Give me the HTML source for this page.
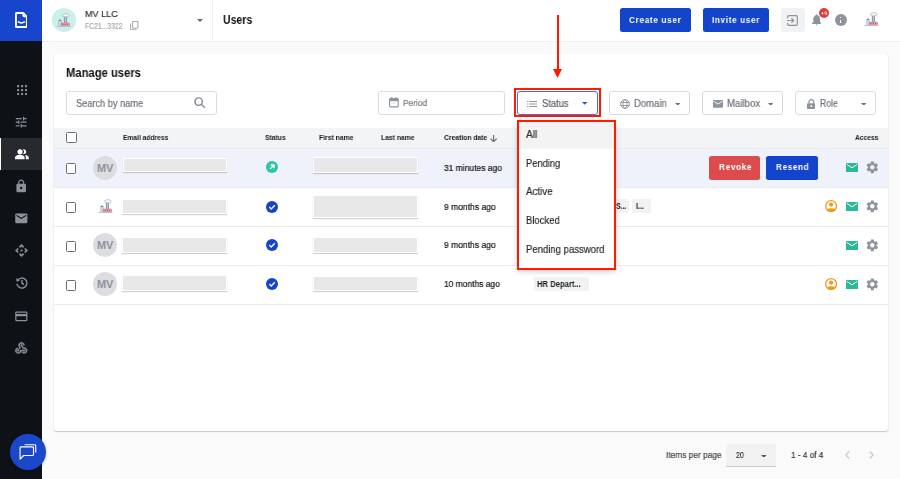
<!DOCTYPE html>
<html><head><meta charset="utf-8">
<style>
*{box-sizing:border-box;margin:0;padding:0}
html,body{width:900px;height:479px;overflow:hidden;background:#fafafa;font-family:"Liberation Sans",sans-serif;color:#111;position:relative}
.a{position:absolute}
.t{position:absolute;white-space:nowrap;line-height:1;transform-origin:0 0;will-change:transform}
.red{position:absolute;border:2px solid #ff1a00}
.blk{position:absolute;background:#e8e8e8;border:1.5px solid #fff;box-shadow:0 1px 1px rgba(0,0,0,.18)}
.chk{position:absolute;width:10.8px;height:10.8px;border:1.6px solid #6a6d72;border-radius:1.5px;background:#fff}
.mv{position:absolute;width:24px;height:24px;border-radius:50%;background:#dcdde0;color:#8c939f;font-weight:700;font-size:11px;text-align:center;line-height:24px;letter-spacing:-0.3px}
.fbox{position:absolute;top:91.3px;height:24px;border:1px solid #d9dbde;border-radius:3px;background:#fff}
.row{position:absolute;left:54px;width:834px;height:39px;border-bottom:1px solid #ececec}
</style></head><body>
<div class="a" style="left:0;top:0;width:42px;height:479px;background:#0e1217"></div>
<div class="a" style="left:0;top:0;width:42px;height:41px;background:#1746cc"></div>
<svg class="a" style="left:14.5px;top:12px" width="12.8" height="16" viewBox="0 0 12.8 16"><path d="M1.6 0.95H8.2L11.85 4.6V14.4Q11.85 15.05 11.2 15.05H1.6Q0.95 15.05 0.95 14.4V1.6Q0.95 0.95 1.6 0.95Z" fill="none" stroke="#fff" stroke-width="1.9" stroke-linejoin="round"/><path d="M7.4 0.95V3.4Q7.4 5.2 9.2 5.2H11.85Z" fill="#fff"/><path d="M2.9 9.7Q6.4 12.3 9.9 9.7" fill="none" stroke="#fff" stroke-width="1.45"/></svg>
<div class="a" style="left:0;top:138px;width:42px;height:32px;background:#26292e"></div>
<div class="a" style="left:0;top:138px;width:1px;height:32px;background:#fff"></div>
<svg class="a" style="left:16.5px;top:84.9px" width="10.2" height="10.2" viewBox="0 0 10.2 10.2" fill="#8d9096"><rect x="0.10" y="0.10" width="2.1" height="2.1" rx="0.3"/><rect x="0.10" y="4.05" width="2.1" height="2.1" rx="0.3"/><rect x="0.10" y="8.00" width="2.1" height="2.1" rx="0.3"/><rect x="4.05" y="0.10" width="2.1" height="2.1" rx="0.3"/><rect x="4.05" y="4.05" width="2.1" height="2.1" rx="0.3"/><rect x="4.05" y="8.00" width="2.1" height="2.1" rx="0.3"/><rect x="8.00" y="0.10" width="2.1" height="2.1" rx="0.3"/><rect x="8.00" y="4.05" width="2.1" height="2.1" rx="0.3"/><rect x="8.00" y="8.00" width="2.1" height="2.1" rx="0.3"/></svg>
<svg class="a" style="left:14.20px;top:114.50px" width="14.40" height="14.40" viewBox="0 0 24 24"><path d="M3 17v2h6v-2H3zM3 5v2h10V5H3zm10 16v-2h8v-2h-8v-2h-2v6h2zM7 9v2H3v2h4v2h2V9H7zm14 4v-2H11v2h10zm-6-4h2V7h4V5h-4V3h-2v6z" fill="#8d9096"/></svg>
<svg class="a" style="left:14.6px;top:149px" width="14" height="11" viewBox="0 0 14 11" fill="#fff"><circle cx="5.05" cy="2.8" r="2.6"/><path d="M7.9 0.4A2.5 2.5 0 1 1 7.9 5.1A3.3 3.3 0 0 0 7.9 0.4Z"/><path d="M0 10.3V8.6C0 6.6 2.5 5.7 4.8 5.7S9.6 6.6 9.6 8.6V10.3Z"/><path d="M10.3 6.1C12.5 6.4 13.8 7.5 13.8 8.8V10.3H10.8V8.6C10.8 7.6 10.7 6.8 10.3 6.1Z"/></svg>
<svg class="a" style="left:14.30px;top:179.30px" width="14.40" height="14.40" viewBox="0 0 24 24"><path d="M18 8h-1V6c0-2.76-2.24-5-5-5S7 3.24 7 6v2H6c-1.1 0-2 .9-2 2v10c0 1.1.9 2 2 2h12c1.1 0 2-.9 2-2V10c0-1.1-.9-2-2-2zm-6 9c-1.1 0-2-.9-2-2s.9-2 2-2 2 .9 2 2-.9 2-2 2zm3.1-9H8.9V6c0-1.71 1.39-3.1 3.1-3.1 1.71 0 3.1 1.39 3.1 3.1v2z" fill="#8d9096"/></svg>
<svg class="a" style="left:14.18px;top:211.06px" width="14.64" height="14.64" viewBox="0 0 24 24"><path d="M20 4H4c-1.1 0-1.99.9-1.99 2L2 18c0 1.1.9 2 2 2h16c1.1 0 2-.9 2-2V6c0-1.1-.9-2-2-2zm0 4l-8 5-8-5V6l8 5 8-5v2z" fill="#8d9096"/></svg>
<svg class="a" style="left:15px;top:244.1px" width="13" height="13" viewBox="0 0 13 13" fill="#8d9096"><g><path d="M6.5 0L9.1 2.6L8 3.9L6.5 2.4L5 3.9L3.9 2.6Z"/></g><path d="M6.5 0L9.1 2.6L8 3.9L6.5 2.4L5 3.9L3.9 2.6Z" transform="rotate(90 6.5 6.5)"/><path d="M6.5 0L9.1 2.6L8 3.9L6.5 2.4L5 3.9L3.9 2.6Z" transform="rotate(180 6.5 6.5)"/><path d="M6.5 0L9.1 2.6L8 3.9L6.5 2.4L5 3.9L3.9 2.6Z" transform="rotate(270 6.5 6.5)"/><circle cx="6.5" cy="6.5" r="1.1"/></svg>
<svg class="a" style="left:16px;top:277.4px" width="11.5" height="11.5" viewBox="0 0 11.5 11.5" fill="none" stroke="#8d9096" stroke-width="1.35"><path d="M1.6 3.4A5 5 0 1 1 0.9 6.8"/><path d="M6 3V6.1L8 7.6"/><path d="M0.2 1.0L0.6 4.7L4.0 3.6Z" fill="#8d9096" stroke="none"/></svg>
<svg class="a" style="left:14.18px;top:308.66px" width="14.64" height="14.64" viewBox="0 0 24 24"><path d="M20 4H4c-1.11 0-1.99.89-1.99 2L2 18c0 1.11.89 2 2 2h16c1.11 0 2-.89 2-2V6c0-1.11-.89-2-2-2zm0 14H4v-6h16v6zm0-10H4V6h16v2z" fill="#8d9096"/></svg>
<svg class="a" style="left:14.40px;top:341.00px" width="14.40" height="14.40" viewBox="0 0 24 24"><path d="M10 15h5.88c.27-.31.67-.5 1.12-.5.83 0 1.5.67 1.5 1.5s-.67 1.5-1.5 1.5c-.44 0-.84-.19-1.12-.5H11.9c-.46 2.28-2.48 4-4.9 4-2.76 0-5-2.24-5-5 0-2.42 1.72-4.440 4-4.9v2.07c-1.16.41-2 1.53-2 2.830 0 1.65 1.35 3 3 3s3-1.35 3-3v-1zm2.5-11c1.65 0 3 1.35 3 3h2c0-2.76-2.240-5-5-5s-5 2.24-5 5c0 1.43.6 2.71 1.55 3.62l-2.35 3.9C5.52 14.66 5 15.27 5 16c0 .83.67 1.5 1.5 1.5S8 16.83 8 16c0-.16-.02-.31-.07-.45l3.38-5.63C10.49 9.61 9.5 8.42 9.5 7c0-1.65 1.35-3 3-3zm4.5 9c-.64 0-1.23.2-1.72.54l-3.050-5.07C11.53 8.35 11 7.74 11 7c0-.83.67-1.5 1.5-1.5S14 6.17 14 7c0 .15-.02.29-.06.43l2.19 3.64c.28-.05.57-.07.870-.07 2.76 0 5 2.24 5 5s-2.24 5-5 5c-1.85 0-3.47-1.01-4.33-2.5h2.67c.48.32 1.050.5 1.66.5 1.65 0 3-1.35 3-3s-1.35-3-3-3z" fill="#8d9096" stroke="#8d9096" stroke-width="0.6"/></svg>
<div class="a" style="left:9.7px;top:434px;width:36px;height:36px;border-radius:50%;background:#1a47cc;box-shadow:0 1px 3px rgba(0,0,0,.25)"></div>
<svg class="a" style="left:19.3px;top:443.5px" width="18" height="17" viewBox="0 0 18 17" fill="none" stroke="#fff" stroke-width="1.15" stroke-linejoin="round"><path d="M5.6 0.7H15.8Q16.7 0.7 16.7 1.6V8.6"/><path d="M2 2.9H13.6Q14.5 2.9 14.5 3.8V10.6Q14.5 11.5 13.6 11.5H4.6L1.1 15.2V3.8Q1.1 2.9 2 2.9Z"/></svg>
<div class="a" style="left:42px;top:0;width:858px;height:41px;background:#fff"></div>
<div class="a" style="left:42px;top:41px;width:858px;height:1px;background:#efefef"></div>
<div class="a" style="left:212px;top:0;width:1px;height:41px;background:#efefef"></div>
<div class="a" style="left:52px;top:8px;width:24px;height:24px;border-radius:50%;background:#c9f0e9"></div>
<svg class="a" style="left:56.3px;top:13.3px" width="15.0" height="14.0" viewBox="0 0 15 14"><rect x="7.7" y="3.6" width="3.4" height="6.8" fill="#c2cddc"/><rect x="8.4" y="4" width="0.7" height="6" fill="#6f7d96"/><rect x="10" y="4" width="0.6" height="6" fill="#6f7d96"/><path d="M6.6 2.6Q6.4 1.3 7.9 1.3Q8.7 0.2 10.2 0.8Q11.6 0.4 12.3 1.4Q13.5 1.7 13.1 2.8Q12.7 3.8 11.2 3.7H8.3Q6.8 3.9 6.6 2.6Z" fill="#f4f6f9" stroke="#8e9ab0" stroke-width="0.5"/><path d="M2.7 7.8Q2.7 6.8 4 6.8Q5.3 6.8 5.3 7.8V13.3H2.7Z" fill="#cfdbe9" stroke="#7d8aa3" stroke-width="0.4"/><path d="M2.7 7.8Q2.7 6.8 4 6.8Q5.3 6.8 5.3 7.8Z" fill="#6a7890"/><rect x="5.2" y="10" width="8.3" height="3.3" fill="#eb9ca8" stroke="#9a6877" stroke-width="0.35"/><rect x="6.3" y="11" width="1.2" height="1.1" fill="#c0606e"/><rect x="8.7" y="11" width="1.2" height="1.1" fill="#c0606e"/><rect x="11.1" y="11" width="1.2" height="1.1" fill="#c0606e"/><rect x="0.3" y="13.1" width="14.4" height="0.8" fill="#b5c1d2"/></svg>
<div class="t" style="left:85.00px;top:9px;font-size:9.7px;color:#333;-webkit-text-stroke:0.2px currentColor;transform:scaleX(0.937);">MV LLC</div>
<div class="t" style="left:85.00px;top:23px;font-size:8.2px;color:#a8acb3;-webkit-text-stroke:0.2px currentColor;transform:scaleX(0.831);">FC21...3322</div>
<svg class="a" style="left:130.3px;top:20.6px" width="9" height="9.6" viewBox="0 0 9 9.6" fill="none" stroke="#a3a8b0" stroke-width="1.05"><rect x="2.6" y="0.6" width="5.3" height="6.6" rx="0.9"/><path d="M0.6 2.4V8.2Q0.6 8.9 1.3 8.9H6.4"/></svg>
<svg class="a" style="left:197px;top:19px" width="6" height="3" viewBox="0 0 6 3"><path d="M0 0H6L3 3Z" fill="#666"/></svg>
<div class="t" style="left:222.60px;top:14px;font-size:12px;color:#111;font-weight:700;transform:scaleX(0.876);">Users</div>
<div class="a" style="left:620px;top:8px;width:70.5px;height:24px;border-radius:2.5px;background:#1443cc"></div>
<div class="a" style="left:702.5px;top:8px;width:66.5px;height:24px;border-radius:2.5px;background:#1443cc"></div>
<div class="t" style="left:628.90px;top:15px;font-size:9.4px;color:#fff;font-weight:700;letter-spacing:0.75px;transform:scaleX(0.876);">Create user</div>
<div class="t" style="left:711.60px;top:15px;font-size:9.4px;color:#fff;font-weight:700;letter-spacing:0.75px;transform:scaleX(0.872);">Invite user</div>
<div class="a" style="left:781px;top:8.3px;width:24px;height:23.5px;border-radius:3px;background:#f1f2f4"></div>
<svg class="a" style="left:787.3px;top:15px" width="11" height="11" viewBox="0 0 11 11" fill="none" stroke="#8e949c" stroke-width="1.2" stroke-linejoin="round"><path d="M0.7 3.3V1.7Q0.7 0.7 1.7 0.7H9.3Q10.3 0.7 10.3 1.7V9.3Q10.3 10.3 9.3 10.3H1.7Q0.7 10.3 0.7 9.3V7.7"/><path d="M0.2 5.5H6.6M4.4 3.2L6.7 5.5L4.4 7.8"/></svg>
<svg class="a" style="left:812px;top:14.4px" width="9.4" height="11.8" viewBox="0 0 9.4 11.8" fill="#8e949c"><rect x="4.2" y="0" width="1" height="1.4" rx="0.4"/><path d="M1.3 9V5.3C1.3 2.9 2.8 1.1 4.7 1.1S8.1 2.9 8.1 5.3V9Z"/><rect x="0" y="8.5" width="9.4" height="1.5" rx="0.6"/><path d="M3.7 10.2H5.7L4.7 11.6Z"/></svg>
<div class="a" style="left:819px;top:8.1px;width:10px;height:10px;border-radius:50%;background:#e03e3e"></div>
<svg class="a" style="left:821px;top:10.6px" width="6.4" height="4.8" viewBox="0 0 6.4 4.8" fill="none" stroke="#fde8e8" stroke-width="0.75"><path d="M0.4 2.3H2.6M1.5 1.2V3.4"/><circle cx="4.65" cy="1.65" r="1.05"/><path d="M5.7 1.6V2.8Q5.7 4.3 4.1 4.4"/></svg>
<div class="a" style="left:834.7px;top:14.3px;width:12px;height:12px;border-radius:50%;background:#8e949c"></div>
<div class="a" style="left:840.1px;top:16.9px;width:1.3px;height:1.3px;background:#fff"></div>
<div class="a" style="left:840.1px;top:19.6px;width:1.3px;height:3.9px;background:#fff"></div>
<svg class="a" style="left:864.4px;top:11.9px" width="15.0" height="14.0" viewBox="0 0 15 14"><rect x="7.7" y="3.6" width="3.4" height="6.8" fill="#c2cddc"/><rect x="8.4" y="4" width="0.7" height="6" fill="#6f7d96"/><rect x="10" y="4" width="0.6" height="6" fill="#6f7d96"/><path d="M6.6 2.6Q6.4 1.3 7.9 1.3Q8.7 0.2 10.2 0.8Q11.6 0.4 12.3 1.4Q13.5 1.7 13.1 2.8Q12.7 3.8 11.2 3.7H8.3Q6.8 3.9 6.6 2.6Z" fill="#f4f6f9" stroke="#8e9ab0" stroke-width="0.5"/><path d="M2.7 7.8Q2.7 6.8 4 6.8Q5.3 6.8 5.3 7.8V13.3H2.7Z" fill="#cfdbe9" stroke="#7d8aa3" stroke-width="0.4"/><path d="M2.7 7.8Q2.7 6.8 4 6.8Q5.3 6.8 5.3 7.8Z" fill="#6a7890"/><rect x="5.2" y="10" width="8.3" height="3.3" fill="#eb9ca8" stroke="#9a6877" stroke-width="0.35"/><rect x="6.3" y="11" width="1.2" height="1.1" fill="#c0606e"/><rect x="8.7" y="11" width="1.2" height="1.1" fill="#c0606e"/><rect x="11.1" y="11" width="1.2" height="1.1" fill="#c0606e"/><rect x="0.3" y="13.1" width="14.4" height="0.8" fill="#b5c1d2"/></svg>
<div class="a" style="left:54px;top:54px;width:834px;height:377px;background:#fff;border-radius:2.5px;box-shadow:0 1px 1.2px rgba(0,0,0,.2),0 0 1px rgba(0,0,0,.12)"></div>
<div class="t" style="left:66.30px;top:67px;font-size:12px;color:#111;font-weight:700;transform:scaleX(0.936);">Manage users</div>
<div class="fbox" style="left:66px;width:151px"></div>
<div class="t" style="left:75.80px;top:99px;font-size:10.2px;color:#6d7178;-webkit-text-stroke:0.2px currentColor;transform:scaleX(0.906);">Search by name</div>
<svg class="a" style="left:194px;top:97.4px" width="11.5" height="11.5" viewBox="0 0 11.5 11.5" fill="none" stroke="#868c95" stroke-width="1.45"><circle cx="4.6" cy="4.6" r="3.75"/><path d="M7.3 7.3L10.8 10.8"/></svg>
<div class="fbox" style="left:378.3px;width:126.6px"></div>
<svg class="a" style="left:389.3px;top:97.3px" width="9.8" height="10.4" viewBox="0 0 9.8 10.4"><rect x="0.55" y="1.6" width="8.7" height="8.25" rx="1" fill="none" stroke="#8e949c" stroke-width="1.1"/><rect x="0.55" y="1.6" width="8.7" height="2.6" fill="#8e949c"/><rect x="2.2" y="0" width="1.1" height="2" fill="#8e949c"/><rect x="6.5" y="0" width="1.1" height="2" fill="#8e949c"/><rect x="2" y="5.8" width="5.8" height="0.6" fill="#d5d8dc"/></svg>
<div class="t" style="left:403.10px;top:98px;font-size:9.4px;color:#74787e;-webkit-text-stroke:0.2px currentColor;transform:scaleX(0.889);">Period</div>
<div class="a" style="left:516.5px;top:91.3px;width:81px;height:24px;border:1.5px solid #4a6fd8;border-radius:3px;background:#fff"></div>
<svg class="a" style="left:527px;top:100.5px" width="10" height="6" viewBox="0 0 10 6" fill="#8e949c"><rect x="0" y="0" width="1.2" height="1"/><rect x="0" y="2.5" width="1.2" height="1"/><rect x="0" y="5" width="1.2" height="1"/><rect x="2.3" y="0" width="7.7" height="1"/><rect x="2.3" y="2.5" width="7.7" height="1"/><rect x="2.3" y="5" width="7.7" height="1"/></svg>
<div class="t" style="left:541.70px;top:99px;font-size:10px;color:#5e6268;-webkit-text-stroke:0.2px currentColor;transform:scaleX(0.938);">Status</div>
<svg class="a" style="left:582.3px;top:102.2px" width="5.4" height="2.8" viewBox="0 0 6 3"><path d="M0 0H6L3 3Z" fill="#2a4fd0"/></svg>
<div class="red" style="left:514px;top:88.2px;width:87.2px;height:28.5px"></div>
<div class="fbox" style="left:609.3px;width:81px"></div>
<svg class="a" style="left:620px;top:98.7px" width="10" height="10" viewBox="0 0 10 10" fill="none" stroke="#8e949c" stroke-width="0.9"><circle cx="5" cy="5" r="4.4"/><ellipse cx="5" cy="5" rx="2" ry="4.4"/><path d="M0.6 3.5H9.4M0.6 6.5H9.4"/></svg>
<div class="t" style="left:634.20px;top:99px;font-size:10px;color:#6d7178;-webkit-text-stroke:0.2px currentColor;transform:scaleX(0.950);">Domain</div>
<svg class="a" style="left:675px;top:102.6px" width="5.4" height="2.8" viewBox="0 0 6 3"><path d="M0 0H6L3 3Z" fill="#6d7178"/></svg>
<div class="fbox" style="left:702.2px;width:81px"></div>
<svg class="a" style="left:713px;top:99.8px" width="10" height="7.8" viewBox="0 0 10 7.8"><rect width="10" height="7.8" rx="0.8" fill="#8e949c"/><path d="M0.6 1.2L5 4L9.4 1.2" fill="none" stroke="#fff" stroke-width="0.9"/></svg>
<div class="t" style="left:727.10px;top:99px;font-size:10px;color:#6d7178;-webkit-text-stroke:0.2px currentColor;transform:scaleX(0.961);">Mailbox</div>
<svg class="a" style="left:767.6px;top:102.6px" width="5.4" height="2.8" viewBox="0 0 6 3"><path d="M0 0H6L3 3Z" fill="#6d7178"/></svg>
<div class="fbox" style="left:795.3px;width:80.5px"></div>
<svg class="a" style="left:806.5px;top:98.5px" width="8.6" height="10" viewBox="0 0 8.6 10" fill="#8e949c"><path d="M2 4.3V3A2.3 2.3 0 0 1 6.6 3V4.3" fill="none" stroke="#8e949c" stroke-width="1.3"/><rect x="0" y="4.2" width="8.6" height="5.8" rx="0.8"/><circle cx="4.3" cy="7" r="0.9" fill="#fff"/></svg>
<div class="t" style="left:819.90px;top:99px;font-size:10px;color:#6d7178;-webkit-text-stroke:0.2px currentColor;transform:scaleX(0.866);">Role</div>
<svg class="a" style="left:861px;top:102.6px" width="5.4" height="2.8" viewBox="0 0 6 3"><path d="M0 0H6L3 3Z" fill="#6d7178"/></svg>
<div class="a" style="left:54px;top:128px;width:834px;height:20px;background:#f3f4f6"></div>
<div class="chk" style="left:65.8px;top:132.3px"></div>
<div class="t" style="left:122.90px;top:134px;font-size:7.6px;color:#1a1a1a;font-weight:700;transform:scaleX(0.880);">Email address</div>
<div class="t" style="left:264.60px;top:134px;font-size:7.6px;color:#1a1a1a;font-weight:700;transform:scaleX(0.892);">Status</div>
<div class="t" style="left:318.50px;top:134px;font-size:7.6px;color:#1a1a1a;font-weight:700;transform:scaleX(0.896);">First name</div>
<div class="t" style="left:381.10px;top:134px;font-size:7.6px;color:#1a1a1a;font-weight:700;transform:scaleX(0.895);">Last name</div>
<div class="t" style="left:443.80px;top:134px;font-size:7.6px;color:#1a1a1a;font-weight:700;transform:scaleX(0.890);">Creation date</div>
<svg class="a" style="left:490.3px;top:134.5px" width="7.2" height="7.4" viewBox="0 0 7.2 7.4" fill="none" stroke="#707378" stroke-width="1.25"><path d="M3.6 0V6.6M0.6 3.7L3.6 6.7L6.6 3.7"/></svg>
<div class="t" style="left:855.20px;top:134px;font-size:7.6px;color:#1a1a1a;font-weight:700;transform:scaleX(0.872);">Access</div>
<div class="a" style="left:54px;top:148px;width:834px;height:39px;background:#eff2fb"></div>
<div class="a" style="left:54px;top:147.5px;width:834px;height:1px;background:#e8eaee"></div>
<div class="a" style="left:54px;top:186.5px;width:834px;height:1px;background:#ececec"></div>
<div class="chk" style="left:65.6px;top:162.8px"></div>
<div class="a" style="left:54px;top:225.5px;width:834px;height:1px;background:#ececec"></div>
<div class="chk" style="left:65.6px;top:201.8px"></div>
<div class="a" style="left:54px;top:264.5px;width:834px;height:1px;background:#ececec"></div>
<div class="chk" style="left:65.6px;top:240.8px"></div>
<div class="a" style="left:54px;top:303.5px;width:834px;height:1px;background:#ececec"></div>
<div class="chk" style="left:65.6px;top:279.8px"></div>
<div class="mv" style="left:93px;top:155.8px">MV</div>
<div class="mv" style="left:93px;top:233.3px">MV</div>
<div class="mv" style="left:93px;top:272.3px">MV</div>
<svg class="a" style="left:97.5px;top:198.6px" width="15.0" height="14.0" viewBox="0 0 15 14"><rect x="7.7" y="3.6" width="3.4" height="6.8" fill="#c2cddc"/><rect x="8.4" y="4" width="0.7" height="6" fill="#6f7d96"/><rect x="10" y="4" width="0.6" height="6" fill="#6f7d96"/><path d="M6.6 2.6Q6.4 1.3 7.9 1.3Q8.7 0.2 10.2 0.8Q11.6 0.4 12.3 1.4Q13.5 1.7 13.1 2.8Q12.7 3.8 11.2 3.7H8.3Q6.8 3.9 6.6 2.6Z" fill="#f4f6f9" stroke="#8e9ab0" stroke-width="0.5"/><path d="M2.7 7.8Q2.7 6.8 4 6.8Q5.3 6.8 5.3 7.8V13.3H2.7Z" fill="#cfdbe9" stroke="#7d8aa3" stroke-width="0.4"/><path d="M2.7 7.8Q2.7 6.8 4 6.8Q5.3 6.8 5.3 7.8Z" fill="#6a7890"/><rect x="5.2" y="10" width="8.3" height="3.3" fill="#eb9ca8" stroke="#9a6877" stroke-width="0.35"/><rect x="6.3" y="11" width="1.2" height="1.1" fill="#c0606e"/><rect x="8.7" y="11" width="1.2" height="1.1" fill="#c0606e"/><rect x="11.1" y="11" width="1.2" height="1.1" fill="#c0606e"/><rect x="0.3" y="13.1" width="14.4" height="0.8" fill="#b5c1d2"/></svg>
<div class="blk" style="left:122.7px;top:157.5px;width:104.6px;height:14.5px"></div>
<div class="blk" style="left:121.5px;top:199.3px;width:105.7px;height:15px"></div>
<div class="blk" style="left:121.7px;top:237.3px;width:105.5px;height:15.5px"></div>
<div class="blk" style="left:121.9px;top:275.2px;width:105.5px;height:15.5px"></div>
<div class="blk" style="left:312.6px;top:157.4px;width:105.4px;height:15.6px"></div>
<div class="blk" style="left:312.6px;top:195.3px;width:105.4px;height:23px"></div>
<div class="blk" style="left:312.6px;top:237.2px;width:105.4px;height:15.8px"></div>
<div class="blk" style="left:312.6px;top:275.5px;width:105.4px;height:15.5px"></div>
<svg class="a" style="left:265.7px;top:161.1px" width="12" height="12" viewBox="0 0 12 12"><circle cx="6" cy="6" r="6" fill="#2ec4a6"/><path d="M4 8L8 4M4.8 4H8V7.2" fill="none" stroke="#fff" stroke-width="1.3"/></svg>
<svg class="a" style="left:265.7px;top:200.6px" width="12" height="12" viewBox="0 0 12 12"><circle cx="6" cy="6" r="6" fill="#1443cc"/><path d="M3.3 6.1L5.2 7.9L8.8 4.3" fill="none" stroke="#fff" stroke-width="1.4"/></svg>
<svg class="a" style="left:265.7px;top:239.4px" width="12" height="12" viewBox="0 0 12 12"><circle cx="6" cy="6" r="6" fill="#1443cc"/><path d="M3.3 6.1L5.2 7.9L8.8 4.3" fill="none" stroke="#fff" stroke-width="1.4"/></svg>
<svg class="a" style="left:265.7px;top:278.4px" width="12" height="12" viewBox="0 0 12 12"><circle cx="6" cy="6" r="6" fill="#1443cc"/><path d="M3.3 6.1L5.2 7.9L8.8 4.3" fill="none" stroke="#fff" stroke-width="1.4"/></svg>
<div class="t" style="left:443.80px;top:163px;font-size:9.6px;color:#111;-webkit-text-stroke:0.2px currentColor;transform:scaleX(0.883);">31 minutes ago</div>
<div class="t" style="left:443.80px;top:202px;font-size:9.6px;color:#111;-webkit-text-stroke:0.2px currentColor;transform:scaleX(0.888);">9 months ago</div>
<div class="t" style="left:443.80px;top:240px;font-size:9.6px;color:#111;-webkit-text-stroke:0.2px currentColor;transform:scaleX(0.888);">9 months ago</div>
<div class="t" style="left:444.00px;top:279px;font-size:9.6px;color:#111;-webkit-text-stroke:0.2px currentColor;transform:scaleX(0.879);">10 months ago</div>
<div class="a" style="left:590px;top:198.9px;width:38.8px;height:14.4px;background:#f1f2f4;border-radius:2px"></div>
<div class="t" style="left:615.90px;top:202px;font-size:9px;color:#222;font-weight:700;transform:scaleX(0.777);">S...</div>
<div class="a" style="left:632px;top:198.9px;width:19px;height:14.4px;background:#f1f2f4;border-radius:2px"></div>
<div class="t" style="left:635.80px;top:202px;font-size:9px;color:#222;font-weight:700;transform:scaleX(0.779);">I...</div>
<div class="a" style="left:533.9px;top:277px;width:54.7px;height:14.2px;background:#f1f2f4;border-radius:2px"></div>
<div class="t" style="left:537.40px;top:280px;font-size:8.4px;color:#222;font-weight:700;transform:scaleX(0.912);">HR Depart...</div>
<div class="a" style="left:709.1px;top:155.9px;width:51.1px;height:23.7px;border-radius:2.5px;background:#dc4c4c"></div>
<div class="t" style="left:718.60px;top:162px;font-size:9.6px;color:#fff;font-weight:700;letter-spacing:0.7px;transform:scaleX(0.863);">Revoke</div>
<div class="a" style="left:766.1px;top:155.9px;width:51.7px;height:23.7px;border-radius:2.5px;background:#1443cc"></div>
<div class="t" style="left:775.60px;top:162px;font-size:9.6px;color:#fff;font-weight:700;letter-spacing:0.7px;transform:scaleX(0.854);">Resend</div>
<svg class="a" style="left:845.7px;top:162.5px" width="12" height="9.4" viewBox="0 0 12 9.4"><rect width="12" height="9.4" rx="1" fill="#2bb99a"/><path d="M0.8 1.4L6 4.8L11.2 1.4" fill="none" stroke="#fff" stroke-width="1"/></svg>
<svg class="a" style="left:864.91px;top:159.78px" width="14.64" height="14.64" viewBox="0 0 24 24"><path d="M19.14 12.94c.04-.3.06-.61.06-.94 0-.32-.02-.64-.07-.94l2.03-1.58c.18-.14.23-.41.12-.61l-1.92-3.32c-.12-.22-.37-.29-.59-.22l-2.39.96c-.5-.38-1.030-.7-1.62-.94l-.36-2.54c-.04-.24-.24-.41-.48-.41h-3.84c-.24 0-.43.17-.47.41l-.36 2.54c-.59.24-1.13.57-1.62.94l-2.39-.96c-.22-.08-.47 0-.59.22L2.74 8.87c-.12.21-.08.47.12.61l2.03 1.58c-.05.3-.09.63-.09.94s.02.64.07.94l-2.03 1.58c-.18.14-.23.41-.12.61l1.92 3.32c.12.22.37.29.59.22l2.39-.96c.5.38 1.03.7 1.62.94l.36 2.54c.05.24.24.41.48.41h3.84c.24 0 .44-.17.47-.41l.36-2.54c.59-.24 1.13-.56 1.62-.94l2.39.96c.22.08.47 0 .59-.22l1.92-3.32c.12-.22.07-.47-.12-.61l-2.01-1.58zM12 15.6c-1.98 0-3.6-1.62-3.6-3.6s1.62-3.6 3.6-3.6 3.6 1.62 3.6 3.6-1.62 3.6-3.6 3.6z" fill="#8e949c"/></svg>
<svg class="a" style="left:845.7px;top:201.5px" width="12" height="9.4" viewBox="0 0 12 9.4"><rect width="12" height="9.4" rx="1" fill="#2bb99a"/><path d="M0.8 1.4L6 4.8L11.2 1.4" fill="none" stroke="#fff" stroke-width="1"/></svg>
<svg class="a" style="left:864.91px;top:198.78px" width="14.64" height="14.64" viewBox="0 0 24 24"><path d="M19.14 12.94c.04-.3.06-.61.06-.94 0-.32-.02-.64-.07-.94l2.03-1.58c.18-.14.23-.41.12-.61l-1.92-3.32c-.12-.22-.37-.29-.59-.22l-2.39.96c-.5-.38-1.030-.7-1.62-.94l-.36-2.54c-.04-.24-.24-.41-.48-.41h-3.84c-.24 0-.43.17-.47.41l-.36 2.54c-.59.24-1.13.57-1.62.94l-2.39-.96c-.22-.08-.47 0-.59.22L2.74 8.87c-.12.21-.08.47.12.61l2.03 1.58c-.05.3-.09.63-.09.94s.02.64.07.94l-2.03 1.58c-.18.14-.23.41-.12.61l1.92 3.32c.12.22.37.29.59.22l2.39-.96c.5.38 1.03.7 1.62.94l.36 2.54c.05.24.24.41.48.41h3.84c.24 0 .44-.17.47-.41l.36-2.54c.59-.24 1.13-.56 1.62-.94l2.39.96c.22.08.47 0 .59-.22l1.92-3.32c.12-.22.07-.47-.12-.61l-2.01-1.58zM12 15.6c-1.98 0-3.6-1.62-3.6-3.6s1.62-3.6 3.6-3.6 3.6 1.62 3.6 3.6-1.62 3.6-3.6 3.6z" fill="#8e949c"/></svg>
<svg class="a" style="left:825px;top:200.1px" width="12.2" height="12.2" viewBox="0 0 12 12"><circle cx="6" cy="6" r="5.35" fill="none" stroke="#f09a1a" stroke-width="1.25"/><circle cx="6" cy="4.5" r="2.1" fill="#f09a1a"/><path d="M1.6 9.1Q6 6.9 10.4 9.1A5.4 5.4 0 0 1 1.6 9.1Z" fill="#f09a1a"/></svg>
<svg class="a" style="left:845.7px;top:240.5px" width="12" height="9.4" viewBox="0 0 12 9.4"><rect width="12" height="9.4" rx="1" fill="#2bb99a"/><path d="M0.8 1.4L6 4.8L11.2 1.4" fill="none" stroke="#fff" stroke-width="1"/></svg>
<svg class="a" style="left:864.91px;top:237.78px" width="14.64" height="14.64" viewBox="0 0 24 24"><path d="M19.14 12.94c.04-.3.06-.61.06-.94 0-.32-.02-.64-.07-.94l2.03-1.58c.18-.14.23-.41.12-.61l-1.92-3.32c-.12-.22-.37-.29-.59-.22l-2.39.96c-.5-.38-1.030-.7-1.62-.94l-.36-2.54c-.04-.24-.24-.41-.48-.41h-3.84c-.24 0-.43.17-.47.41l-.36 2.54c-.59.24-1.13.57-1.62.94l-2.39-.96c-.22-.08-.47 0-.59.22L2.74 8.87c-.12.21-.08.47.12.61l2.03 1.58c-.05.3-.09.63-.09.94s.02.64.07.94l-2.03 1.58c-.18.14-.23.41-.12.61l1.92 3.32c.12.22.37.29.59.22l2.39-.96c.5.38 1.03.7 1.62.94l.36 2.54c.05.24.24.41.48.41h3.84c.24 0 .44-.17.47-.41l.36-2.54c.59-.24 1.13-.56 1.62-.94l2.39.96c.22.08.47 0 .59-.22l1.92-3.32c.12-.22.07-.47-.12-.61l-2.01-1.58zM12 15.6c-1.98 0-3.6-1.62-3.6-3.6s1.62-3.6 3.6-3.6 3.6 1.62 3.6 3.6-1.62 3.6-3.6 3.6z" fill="#8e949c"/></svg>
<svg class="a" style="left:845.7px;top:279.5px" width="12" height="9.4" viewBox="0 0 12 9.4"><rect width="12" height="9.4" rx="1" fill="#2bb99a"/><path d="M0.8 1.4L6 4.8L11.2 1.4" fill="none" stroke="#fff" stroke-width="1"/></svg>
<svg class="a" style="left:864.91px;top:276.78px" width="14.64" height="14.64" viewBox="0 0 24 24"><path d="M19.14 12.94c.04-.3.06-.61.06-.94 0-.32-.02-.64-.07-.94l2.03-1.58c.18-.14.23-.41.12-.61l-1.92-3.32c-.12-.22-.37-.29-.59-.22l-2.39.96c-.5-.38-1.030-.7-1.62-.94l-.36-2.54c-.04-.24-.24-.41-.48-.41h-3.84c-.24 0-.43.17-.47.41l-.36 2.54c-.59.24-1.13.57-1.62.94l-2.39-.96c-.22-.08-.47 0-.59.22L2.74 8.87c-.12.21-.08.47.12.61l2.03 1.58c-.05.3-.09.63-.09.94s.02.64.07.94l-2.03 1.58c-.18.14-.23.41-.12.61l1.92 3.32c.12.22.37.29.59.22l2.39-.96c.5.38 1.03.7 1.62.94l.36 2.54c.05.24.24.41.48.41h3.84c.24 0 .44-.17.47-.41l.36-2.54c.59-.24 1.13-.56 1.62-.94l2.39.96c.22.08.47 0 .59-.22l1.92-3.32c.12-.22.07-.47-.12-.61l-2.01-1.58zM12 15.6c-1.98 0-3.6-1.62-3.6-3.6s1.62-3.6 3.6-3.6 3.6 1.62 3.6 3.6-1.62 3.6-3.6 3.6z" fill="#8e949c"/></svg>
<svg class="a" style="left:825px;top:278.1px" width="12.2" height="12.2" viewBox="0 0 12 12"><circle cx="6" cy="6" r="5.35" fill="none" stroke="#f09a1a" stroke-width="1.25"/><circle cx="6" cy="4.5" r="2.1" fill="#f09a1a"/><path d="M1.6 9.1Q6 6.9 10.4 9.1A5.4 5.4 0 0 1 1.6 9.1Z" fill="#f09a1a"/></svg>
<div class="a" style="left:518px;top:121px;width:97px;height:148px;background:#fff;box-shadow:0 2px 6px rgba(0,0,0,.24)"></div>
<div class="a" style="left:519px;top:121.5px;width:95px;height:27.5px;background:#f3f3f3"></div>
<div class="t" style="left:526.10px;top:129px;font-size:10.8px;color:#2b2b2b;-webkit-text-stroke:0.2px currentColor;transform:scaleX(0.940);">All</div>
<div class="t" style="left:526.10px;top:158px;font-size:10.8px;color:#2b2b2b;-webkit-text-stroke:0.2px currentColor;transform:scaleX(0.866);">Pending</div>
<div class="t" style="left:526.10px;top:186px;font-size:10.8px;color:#2b2b2b;-webkit-text-stroke:0.2px currentColor;transform:scaleX(0.905);">Active</div>
<div class="t" style="left:526.10px;top:215px;font-size:10.8px;color:#2b2b2b;-webkit-text-stroke:0.2px currentColor;transform:scaleX(0.877);">Blocked</div>
<div class="t" style="left:526.10px;top:244px;font-size:10.8px;color:#2b2b2b;-webkit-text-stroke:0.2px currentColor;transform:scaleX(0.883);">Pending password</div>
<div class="red" style="left:517.3px;top:119.7px;width:98.7px;height:150.5px"></div>
<div class="a" style="left:556.5px;top:14.5px;width:2px;height:56px;background:#ff1a00"></div>
<svg class="a" style="left:553px;top:68.8px" width="9" height="9" viewBox="0 0 9 9"><path d="M0 0H9L4.5 9Z" fill="#ff1a00"/></svg>
<div class="t" style="left:665.70px;top:450px;font-size:9.5px;color:#444;-webkit-text-stroke:0.2px currentColor;transform:scaleX(0.878);">Items per page</div>
<div class="a" style="left:726.2px;top:443.5px;width:50px;height:23.4px;background:#f2f2f2;border-bottom:1px solid #cdcdcd"></div>
<div class="t" style="left:735.50px;top:451px;font-size:8.5px;color:#333;-webkit-text-stroke:0.2px currentColor;transform:scaleX(0.822);">20</div>
<svg class="a" style="left:761.2px;top:454.6px" width="5.6" height="2.8" viewBox="0 0 6 3"><path d="M0 0H6L3 3Z" fill="#555"/></svg>
<div class="t" style="left:791.00px;top:450px;font-size:9.5px;color:#333;-webkit-text-stroke:0.2px currentColor;transform:scaleX(0.860);">1 - 4 of 4</div>
<svg class="a" style="left:845px;top:450.5px" width="5" height="8" viewBox="0 0 5 8" fill="none" stroke="#c8c8c8" stroke-width="1.1"><path d="M4.2 0.5L0.8 4L4.2 7.5"/></svg>
<svg class="a" style="left:869px;top:450.5px" width="5" height="8" viewBox="0 0 5 8" fill="none" stroke="#c8c8c8" stroke-width="1.1"><path d="M0.8 0.5L4.2 4L0.8 7.5"/></svg>
</body></html>
